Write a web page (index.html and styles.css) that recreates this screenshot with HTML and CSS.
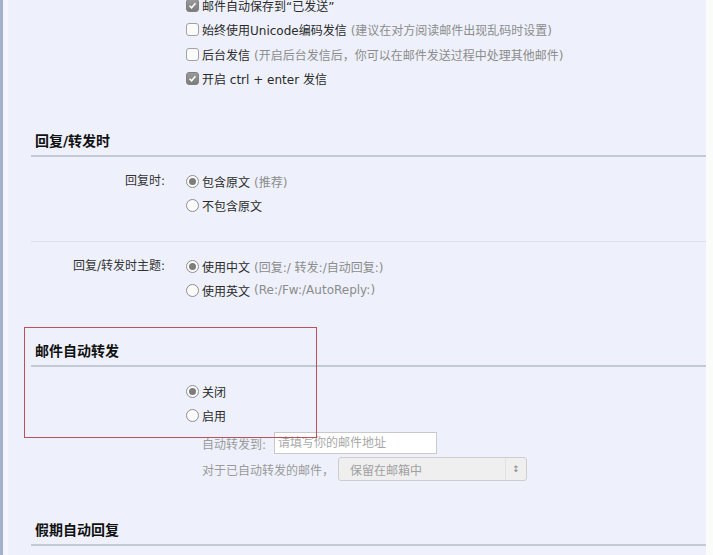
FILE: index.html
```html
<!DOCTYPE html>
<html lang="zh-CN">
<head>
    <meta charset="UTF-8">
    <title>邮件设置</title>
    <link rel="stylesheet" href="styles.css">
</head>
<body>
<div class="Frame">
    <div class="Edge"></div>
    <div class="Panel">

        <!-- 发信选项 -->
        <div class="Field TopGroup">
            <div class="Label"></div>
            <div class="Options">
                <div class="Row"><span class="Box Checked"><svg viewBox="0 0 13 13"><path d="M3 6.8 L5.4 9.2 L10 3.8" /></svg></span>邮件自动保存到“已发送”</div>
                <div class="Row"><span class="Box"></span>始终使用Unicode编码发信 <span class="Hint">(建议在对方阅读邮件出现乱码时设置)</span></div>
                <div class="Row"><span class="Box"></span>后台发信 <span class="Hint">(开启后台发信后，你可以在邮件发送过程中处理其他邮件)</span></div>
                <div class="Row"><span class="Box Checked"><svg viewBox="0 0 13 13"><path d="M3 6.8 L5.4 9.2 L10 3.8" /></svg></span>开启 ctrl + enter 发信</div>
            </div>
        </div>

        <div class="Section">
            <h2>回复/转发时</h2>
            <div class="Field Spaced">
                <div class="Label">回复时:</div>
                <div class="Options">
                    <div class="Row"><span class="Radio On"></span>包含原文 <span class="Hint">(推荐)</span></div>
                    <div class="Row"><span class="Radio"></span>不包含原文</div>
                </div>
            </div>
            <div class="Field Divided">
                <div class="Label">回复/转发时主题:</div>
                <div class="Options">
                    <div class="Row"><span class="Radio On"></span>使用中文 <span class="Hint">(回复:/ 转发:/自动回复:)</span></div>
                    <div class="Row"><span class="Radio"></span>使用英文 <span class="Hint">(Re:/Fw:/AutoReply:)</span></div>
                </div>
            </div>
        </div>

        <div class="Section">
            <h2>邮件自动转发</h2>
            <div class="Field">
                <div class="Label"></div>
                <div class="Options">
                    <div class="Row"><span class="Radio On"></span>关闭</div>
                    <div class="Row"><span class="Radio"></span>启用</div>
                    <div class="SubRow First">
                        <span class="SubLabel">自动转发到:</span>
                        <input class="TextInput" type="text" placeholder="请填写你的邮件地址" disabled>
                    </div>
                    <div class="SubRow">
                        <span class="SubLabel">对于已自动转发的邮件，</span>
                        <div class="Select">
                            <span>保留在邮箱中</span>
                            <span class="Arrows">&#8597;</span>
                        </div>
                    </div>
                </div>
            </div>
        </div>

        <div class="Section">
            <h2>假期自动回复</h2>
        </div>

    </div>
</div>

<!-- 标注框 -->
<div class="Mark"></div>
</body>
</html>
```

FILE: styles.css
```css
body {
    margin: 0;
    background-color: #fafcfc;
    font-family: "DejaVu Sans", "Noto Sans CJK SC", sans-serif;
    font-size: 12px;
    color: #2a2a2a;
    overflow: hidden;
}

.Frame {
    display: flex;
    height: 555px;
}

.Edge {
    width: 3px;
    background-color: #a4b3cb;
}

.Panel {
    width: 675px;
    padding-left: 23px;
    border-left: 5px solid #f3f6fd;
    background-color: #eef1fb;
}

/* 表单行 */

.Field {
    display: grid;
    grid-template-columns: 134px 1fr;
    column-gap: 21px;
    padding: 12px 0 0 0;
}

.Field.Spaced {
    padding-bottom: 24px;
}

.Field.Divided {
    border-top: 1px solid #dcdfe9;
}

.TopGroup {
    margin-top: -7px;
    padding: 0;
}

.TopGroup .Row {
    height: 24.5px;
}

.Label {
    text-align: right;
    line-height: 24px;
    color: #333;
}

.Row {
    display: flex;
    align-items: center;
    height: 24px;
    white-space: nowrap;
}

.Hint {
    color: #8c8c8c;
    margin-left: 4px;
}

/* 复选框与单选框 */

.Box {
    box-sizing: border-box;
    width: 13px;
    height: 13px;
    margin-right: 3px;
    border: 1px solid #a2a2a2;
    border-radius: 3px;
    background-color: #fbfbfb;
}

.Box.Checked {
    border-color: #808080;
    background: linear-gradient(#9a9a9a, #7c7c7c);
}

.Box svg {
    display: block;
    width: 11px;
    height: 11px;
}

.Box svg path {
    fill: none;
    stroke: #fff;
    stroke-width: 1.8;
}

.Radio {
    box-sizing: border-box;
    width: 13px;
    height: 13px;
    margin-right: 3px;
    border: 1px solid #8e8e8e;
    border-radius: 50%;
    background-color: #fbfbfb;
    display: flex;
    align-items: center;
    justify-content: center;
}

.Radio.On::after {
    content: "";
    width: 7px;
    height: 7px;
    border-radius: 50%;
    background-color: #7d7d7d;
}

/* 小节标题 */

.Section {
    margin-top: 36px;
}

.TopGroup + .Section {
    margin-top: 37px;
}

.Section h2 {
    margin: 0;
    padding: 3px 0 4px 4px;
    line-height: 20px;
    font-size: 14px;
    font-weight: bold;
    color: #111;
    border-bottom: 2px solid #c3cad5;
}

/* 自动转发子项 */

.SubRow {
    display: flex;
    align-items: center;
    margin-top: 3px;
    margin-left: 16px;
    color: #9a9a9a;
}

.SubRow.First {
    margin-top: 5px;
}

.SubLabel {
    margin-right: 4px;
}

.SubRow.First .SubLabel {
    margin-right: 8px;
}

.TextInput {
    box-sizing: border-box;
    width: 163px;
    height: 22px;
    margin: 0;
    padding: 0 3px;
    border: 1px solid #c9c9c9;
    background-color: #fff;
    font-family: inherit;
    font-size: 12px;
}

.TextInput::placeholder {
    color: #a8a8a8;
}

.Select {
    box-sizing: border-box;
    display: flex;
    align-items: center;
    justify-content: space-between;
    width: 189px;
    height: 24px;
    padding-left: 11px;
    border: 1px solid #cdcdcd;
    border-radius: 3px;
    background-color: #efefef;
    color: #a0a0a0;
}

.Select .Arrows {
    width: 20px;
    height: 22px;
    line-height: 22px;
    text-align: center;
    font-size: 9px;
    color: #888;
    border-left: 1px solid #e0e0e0;
}

.Mark {
    position: absolute;
    left: 24px;
    top: 327px;
    width: 291px;
    height: 109px;
    border: 1px solid #b8535c;
}
```
